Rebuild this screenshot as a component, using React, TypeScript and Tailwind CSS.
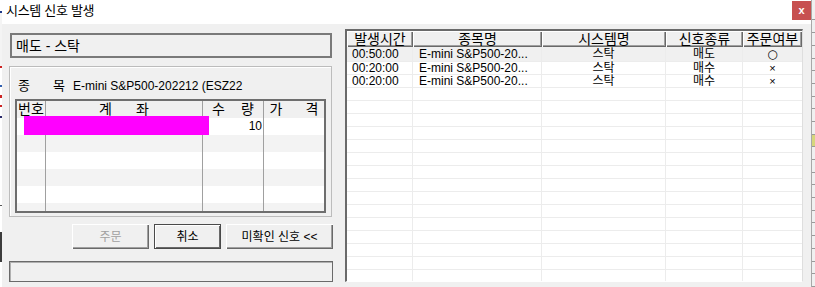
import React from "react";

const rightRows = [
  { t: "00:50:00", n: "E-mini S&P500-20...", s: "스탁", k: "매도", o: "○", sel: true },
  { t: "00:20:00", n: "E-mini S&P500-20...", s: "스탁", k: "매수", o: "×", sel: false },
  { t: "00:20:00", n: "E-mini S&P500-20...", s: "스탁", k: "매수", o: "×", sel: false },
];

const raised =
  "shadow-[inset_1px_1px_0_#ffffff,inset_-1px_-1px_0_#696969,inset_-2px_-2px_0_#a0a0a0]";

function LeftStrip() {
  return (
    <div className="w-[2px] h-[287px] flex flex-col bg-white shrink-0">
      <div className="h-[11px]" />
      <div className="h-[2px] bg-[#1e3a8a]" />
      <div className="h-[53px] bg-[#f4f4f4]" />
      <div className="h-[2px] bg-[#cc2222]" />
      <div className="h-[17px]" />
      <div className="h-[2px] bg-[#3060b0]" />
      <div className="h-[8px]" />
      <div className="h-[3px] bg-[#cc2222]" />
      <div className="h-[7px]" />
      <div className="h-[2px] bg-[#cc2222]" />
      <div className="h-[9px]" />
      <div className="h-[2px] bg-[#2a2a6a]" />
      <div className="h-[87px]" />
      <div className="h-[1px] bg-[#555555]" />
      <div className="h-[26px]" />
      <div className="h-[30px] bg-[#3c3c3c]" />
      <div className="flex-1" />
    </div>
  );
}

function RightStrip() {
  const ticks = Array.from({ length: 22 });
  return (
    <div className="w-[4px] h-[287px] shrink-0 border-l border-[#a8a8a8] bg-[#f0f0f0] flex flex-col">
      <div className="h-[8px]" />
      {ticks.map((_, i) => (
        <div
          key={i}
          className={
            i === 10
              ? "h-[13px] bg-[#d6d67c] border-b border-[#9a9a9a]"
              : "h-[13px] border-b border-[#9a9a9a]"
          }
        />
      ))}
    </div>
  );
}

function LeftGrid() {
  const rows = [0, 1, 2, 3, 4, 5];
  return (
    <div className="mt-[5px] ml-[5px] w-[311px] h-[114px] border-2 border-[#6e6e6e] relative overflow-hidden bg-white">
      <div className="flex h-[17px] bg-[#f0f0f0] text-[14px] leading-[17px]">
        <div className="w-[29px] border-r border-[#a0a0a0] flex justify-center">번호</div>
        <div className="w-[157px] border-r border-[#a0a0a0] flex justify-center gap-[24px]">
          <span>계</span>
          <span>좌</span>
        </div>
        <div className="w-[61px] border-r border-[#a0a0a0] flex justify-center gap-[16px]">
          <span>수</span>
          <span>량</span>
        </div>
        <div className="w-[60px] flex justify-center gap-[23px]">
          <span>가</span>
          <span>격</span>
        </div>
      </div>
      {rows.map((r) => (
        <div
          key={r}
          className={
            r % 2 === 0
              ? "flex h-[17px] bg-white text-[12px] leading-[17px]"
              : "flex h-[17px] bg-[#f3f3f3] text-[12px] leading-[17px]"
          }
        >
          <div className="w-[29px] border-r border-[#a0a0a0]" />
          <div className="w-[157px] border-r border-[#a0a0a0]" />
          <div className="w-[61px] border-r border-[#a0a0a0] text-right pr-[1px]">
            {r === 0 ? "10" : ""}
          </div>
          <div className="w-[60px]" />
        </div>
      ))}
      <div className="absolute left-[7px] top-[15px] w-[185px] h-[19px] bg-[#ff00ff]" />
    </div>
  );
}

function RightGrid() {
  const empties = Array.from({ length: 15 });
  const cols = [
    "w-[66px] border-r border-[#ececec] pl-[5px]",
    "w-[129px] border-r border-[#ececec] pl-[6px]",
    "w-[124px] border-r border-[#ececec] text-center",
    "w-[77px] border-r border-[#ececec] text-center",
    "w-[59px] text-center",
  ];
  const heads = ["발생시간", "종목명", "시스템명", "신호종류", "주문여부"];
  const hw = ["w-[66px]", "w-[129px]", "w-[124px]", "w-[77px]", "w-[59px]"];
  return (
    <div className="ml-[12px] w-[458px] h-[253px] border-l-2 border-t-2 border-[#6a6a6a] border-r border-b border-r-[#dedede] border-b-[#ffffff] bg-white overflow-hidden flex flex-col">
      <div className="flex h-[16px] shrink-0">
        {heads.map((h, i) => (
          <div
            key={h}
            className={`${hw[i]} bg-[#f0f0f0] ${raised} text-[14px] leading-[16px] text-center`}
          >
            {h}
          </div>
        ))}
      </div>
      {rightRows.map((r, i) => (
        <div
          key={i}
          className={
            (i === 0 ? "h-[15px] bg-[#f0f0f0] " : "h-[13px] bg-white ") +
            "flex shrink-0 border-b border-[#ececec] text-[12px] leading-[13px] items-center"
          }
        >
          <div className={cols[0] + " h-full flex items-center"}>{r.t}</div>
          <div className={cols[1] + " h-full flex items-center whitespace-nowrap"}>{r.n}</div>
          <div className={cols[2] + " h-full flex items-center justify-center"}>{r.s}</div>
          <div className={cols[3] + " h-full flex items-center justify-center"}>{r.k}</div>
          <div className={cols[4] + " h-full flex items-center justify-center"}>
            <span
              className={
                r.o === "○"
                  ? "text-[12px] leading-[12px] font-['DejaVu_Sans',sans-serif]"
                  : "text-[11px] leading-[11px]"
              }
            >
              {r.o}
            </span>
          </div>
        </div>
      ))}
      {empties.map((_, i) => (
        <div key={i} className="h-[13px] flex shrink-0 border-b border-[#ececec]">
          {cols.map((c, j) => (
            <div key={j} className={c + " h-full"} />
          ))}
        </div>
      ))}
    </div>
  );
}

export default function App() {
  return (
    <div className="w-[815px] h-[287px] overflow-hidden flex bg-[#f0f0f0] text-black font-['Liberation_Sans','Noto_Sans_CJK_KR',sans-serif]">
      <LeftStrip />
      <div className="w-[809px] h-[287px] flex flex-col shrink-0">
        <div className="h-[24px] bg-white flex items-start shrink-0">
          <span className="ml-[4px] mt-[3px] text-[13px] leading-[16px] tracking-[-0.3px]">
            시스템 신호 발생
          </span>
          <div className="ml-auto mt-[1px] w-[19px] h-[19px] bg-[#c75050] text-white text-[11px] font-bold leading-[19px] text-center">
            x
          </div>
        </div>
        <div className="flex-1 bg-[#f0f0f0] flex pl-[7px] pr-[8px] pt-[5px]">
          <div className="w-[324px] flex flex-col shrink-0">
            <div className="mt-[4px] ml-[1px] w-[322px] h-[25px] border-2 border-[#7a7a7a] flex items-center pl-[4px] text-[14px] leading-[16px]">
              매도 - 스탁
            </div>
            <div className="mt-[8px] w-[323px] h-[151px] border border-[#bcbcbc] shadow-[inset_1px_1px_0_#ffffff]">
              <div className="flex pl-[8px] pt-[11px] text-[13px] leading-[16px]">
                <span className="w-[35px]">종</span>
                <span className="w-[20px]">목</span>
                <span className="text-[12px]">E-mini S&amp;P500-202212 (ESZ22</span>
              </div>
              <LeftGrid />
            </div>
            <div className="mt-[7px] flex justify-end gap-[5px] h-[25px] text-[12px]">
              <div className={`w-[77px] h-[25px] bg-[#f0f0f0] ${raised} flex items-center justify-center text-[#a0a0a0]`}>
                주문
              </div>
              <div className="w-[67px] h-[25px] bg-[#f0f0f0] border border-[#4a4a4a] shadow-[inset_1px_1px_0_#ffffff,inset_-1px_-1px_0_#696969] flex items-center justify-center">
                취소
              </div>
              <div className={`w-[107px] h-[25px] bg-[#f0f0f0] ${raised} flex items-center justify-center`}>
                미확인 신호 &lt;&lt;
              </div>
            </div>
            <div className="mt-[12px] w-[324px] h-[21px] border border-[#6a6a6a] shadow-[inset_1px_1px_0_#b0b0b0]" />
          </div>
          <RightGrid />
        </div>
      </div>
      <RightStrip />
    </div>
  );
}
